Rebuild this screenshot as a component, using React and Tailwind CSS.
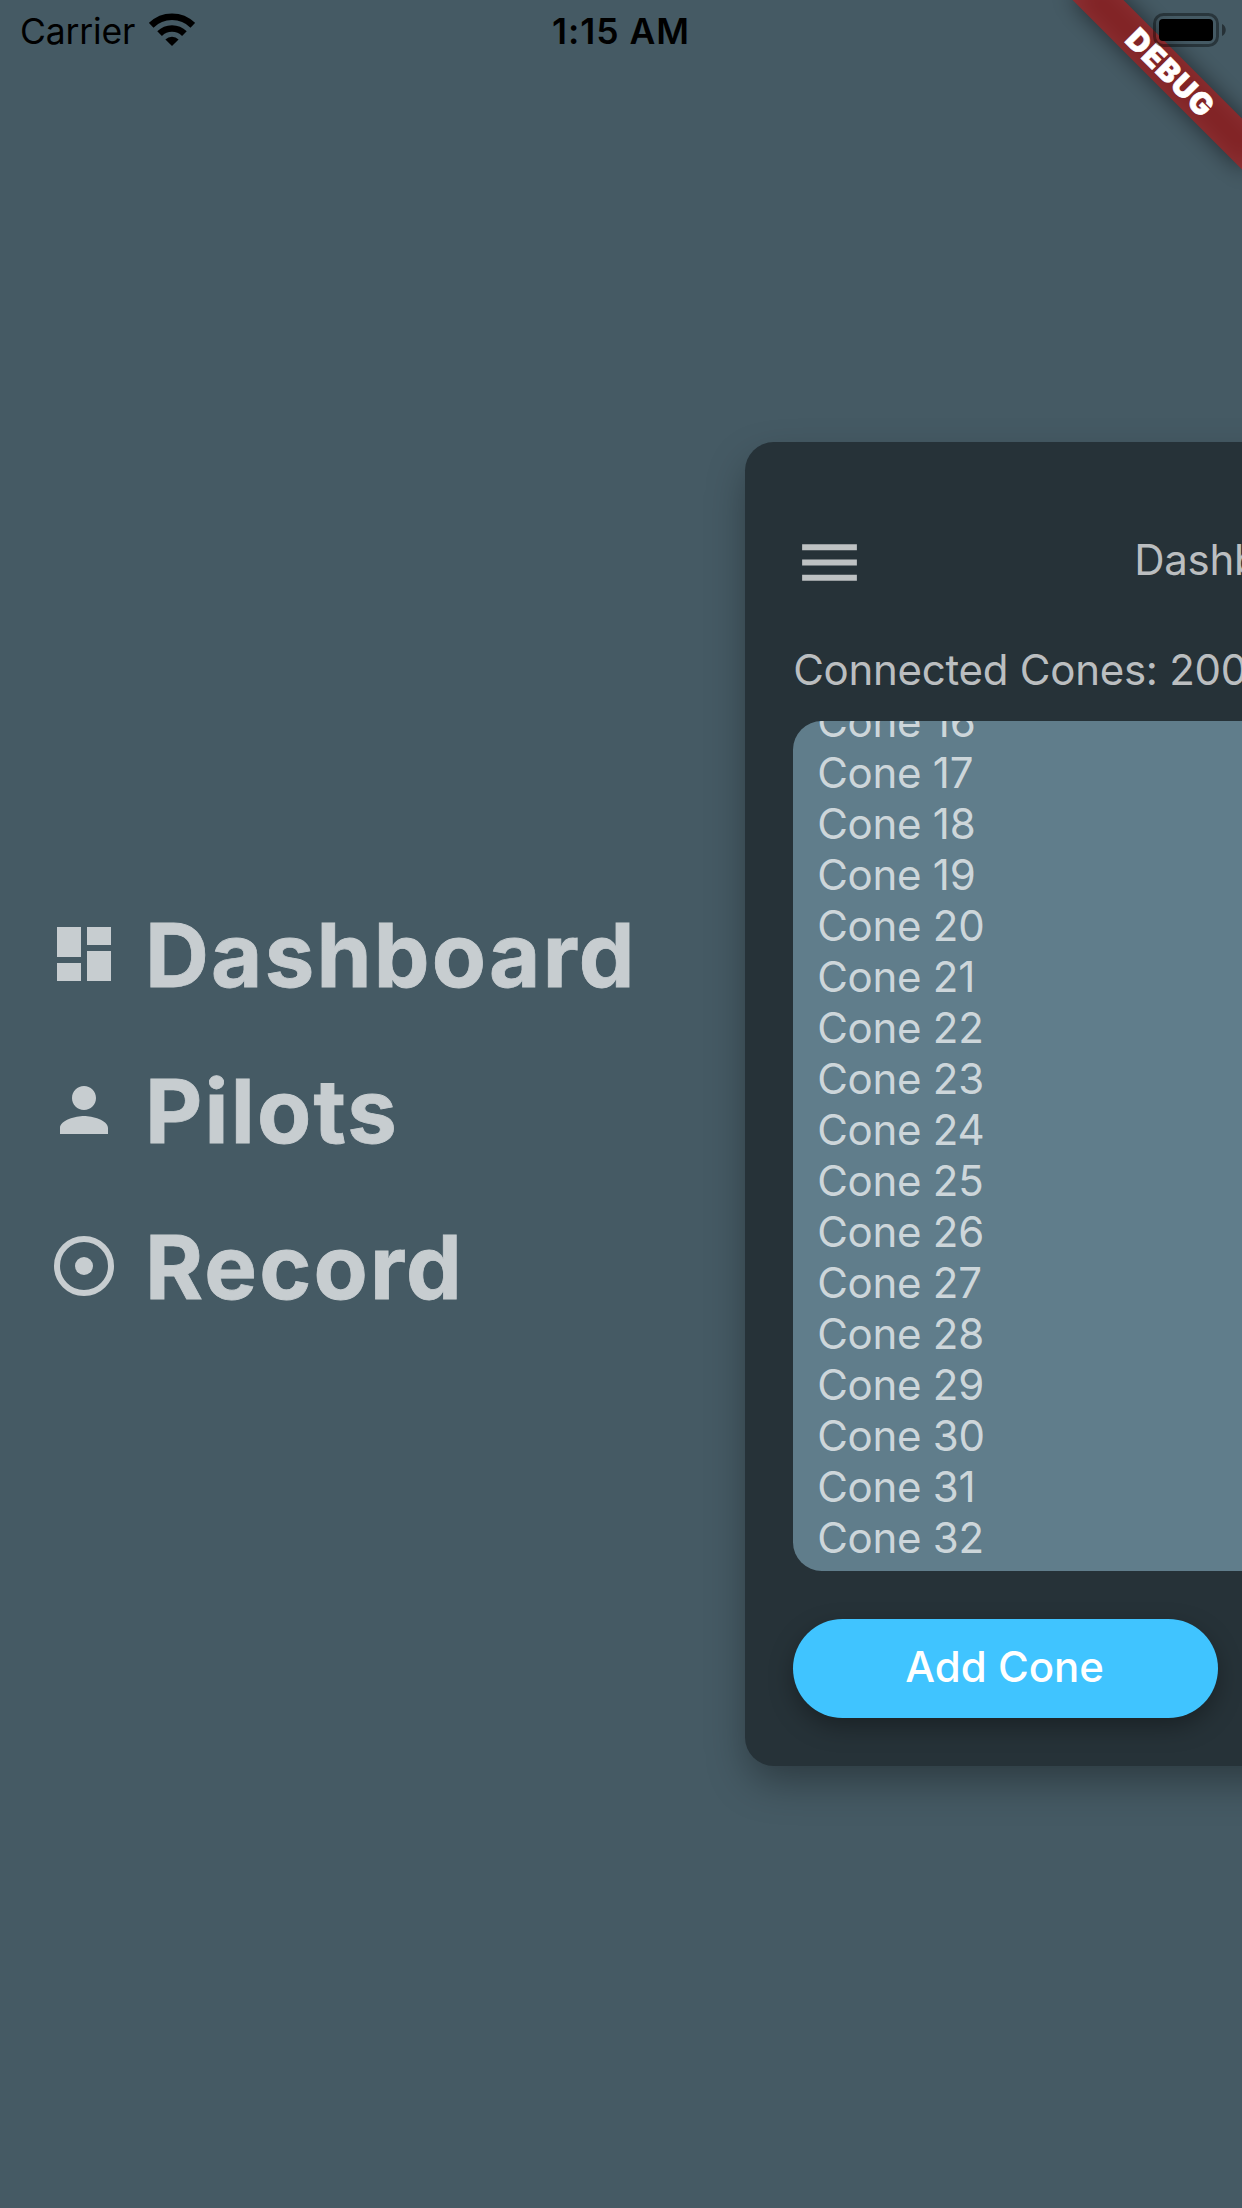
import React from "react";

const cones = Array.from({ length: 17 }, (_, i) => 16 + i);

function DashboardIcon() {
  return (
    <svg viewBox="0 0 24 24" className="h-[72px] w-[72px] shrink-0 fill-current">
      <path d="M3 13h8V3H3v10zm0 8h8v-6H3v6zm10 0h8V11h-8v10zm0-18v6h8V3h-8z" />
    </svg>
  );
}

function PersonIcon() {
  return (
    <svg viewBox="0 0 24 24" className="h-[72px] w-[72px] shrink-0 fill-current">
      <path d="M12 12c2.21 0 4-1.79 4-4s-1.79-4-4-4-4 1.79-4 4 1.79 4 4 4zm0 2c-2.67 0-8 1.34-8 4v2h16v-2c0-2.66-5.33-4-8-4z" />
    </svg>
  );
}

function RecordIcon() {
  return (
    <svg viewBox="0 0 24 24" className="h-[72px] w-[72px] shrink-0">
      <circle cx="12" cy="12" r="9" fill="none" stroke="currentColor" strokeWidth="2" />
      <circle cx="12" cy="12" r="3" fill="currentColor" />
    </svg>
  );
}

function MenuIcon() {
  return (
    <svg viewBox="0 0 24 24" className="h-[73px] w-[73px] shrink-0 fill-current">
      <path d="M3 18h18v-2H3v2zm0-5h18v-2H3v2zm0-7v2h18V6H3z" />
    </svg>
  );
}

function WifiIcon() {
  return (
    <svg viewBox="0 0 46 33" className="mt-[13px] ml-[14px] h-[33px] w-[46px]">
      <g fill="none" stroke="#000" strokeWidth="6.6">
        <path d="M2.2 12.3A29.5 29.5 0 0 1 43.8 12.3" />
        <path d="M10.6 20.6A17.6 17.6 0 0 1 35.4 20.6" />
      </g>
      <path d="M23 33l-6.6-6.6a9.4 9.4 0 0 1 13.2 0z" />
    </svg>
  );
}

function BatteryIcon() {
  return (
    <svg viewBox="0 0 73 34" className="mt-[13px] h-[34px] w-[73px]">
      <rect x="1.5" y="1.5" width="63" height="31" rx="9" fill="none" stroke="#000" strokeOpacity="0.4" strokeWidth="3" />
      <rect x="6" y="6" width="54" height="22" rx="4" />
      <path d="M69 11c5 2 5 10 0 12z" fillOpacity="0.45" />
    </svg>
  );
}

function MenuItem({ icon, label }) {
  return (
    <div className="flex h-[108px] items-center gap-[25px] text-[#c7cdd0]">
      {icon}
      <span className="text-[88.5px] leading-[109px] font-bold tracking-[2.2px] [-webkit-text-stroke:0.8px_#c7cdd0]">{label}</span>
    </div>
  );
}

export default function App() {
  return (
    <div className="relative flex h-[2208px] w-[1242px] flex-col overflow-hidden bg-[#455a64] font-['Inter',sans-serif]">
      <header className="relative z-20 grid h-[60px] grid-cols-3 text-black">
        <div className="flex items-start pl-[20px]">
          <span className="mt-[10px] text-[35.5px] leading-[43px] tracking-[-0.15px]">Carrier</span>
          <WifiIcon />
        </div>
        <div className="mt-[10px] text-center text-[35.5px] leading-[43px] font-semibold tracking-[1px]">1:15 AM</div>
        <div className="flex items-start justify-end pr-[16px]">
          <BatteryIcon />
        </div>
      </header>

      <div className="absolute top-[54px] left-[1050px] z-10 h-[36px] w-[240px] rotate-45">
        <div className="absolute inset-0 bg-black/50 blur-[11.8px]" />
        <div className="relative flex h-full items-center justify-center bg-[#b71c1c]/63 pl-[2px] text-[30px] leading-none font-black tracking-[1.3px] text-white [-webkit-text-stroke:0.7px_white]">
          DEBUG
        </div>
      </div>

      <main className="flex flex-1 items-start">
        <nav className="mt-[840px] flex w-[745.2px] shrink-0 flex-col gap-12 pl-12">
          <MenuItem icon={<DashboardIcon />} label="Dashboard" />
          <MenuItem icon={<PersonIcon />} label="Pilots" />
          <MenuItem icon={<RecordIcon />} label="Record" />
        </nav>

        <section className="mt-[381.6px] h-[1324.8px] w-[745.2px] shrink-0 rounded-[28.8px] bg-[#263238] px-12 text-[42px] leading-[51px] tracking-[-0.27px] text-white/70 shadow-[0_18px_42px_-4px_rgba(0,0,0,0.36)]">
          <div className="mt-[84px] flex h-[73px] items-center">
            <MenuIcon />
            <span className="mb-[5px] ml-[268px]">Dashboard</span>
          </div>
          <div className="mt-[45px] whitespace-nowrap">Connected Cones: 200</div>
          <div className="mt-[26px] flex h-[850.4px] flex-col justify-end overflow-hidden rounded-[28.8px] bg-[#607d8b] pb-[8.2px] pl-6">
            {cones.map((n) => (
              <div key={n} className="h-[51px] shrink-0">
                Cone {n}
              </div>
            ))}
          </div>
          <button className="mt-12 block h-[99px] w-[425px] rounded-full bg-[#40c4ff] pr-[2px] pb-[3px] font-medium tracking-[0px] text-white shadow-[0_9px_26px_-2px_rgba(0,0,0,0.36)]">
            Add Cone
          </button>
        </section>
      </main>
    </div>
  );
}
